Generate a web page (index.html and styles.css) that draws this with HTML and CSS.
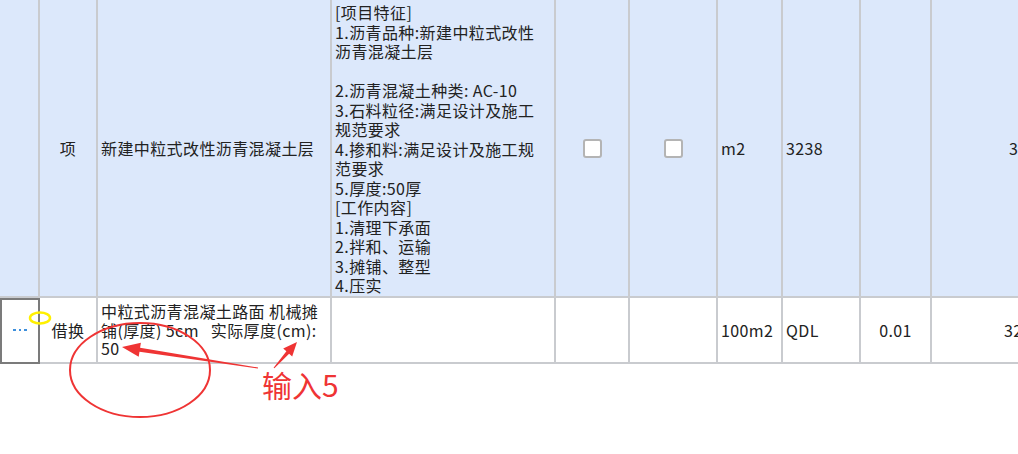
FILE: index.html
```html
<!DOCTYPE html>
<html lang="zh-CN">
<head>
  <meta charset="UTF-8">
  <title>清单项目</title>
  <link rel="stylesheet" href="styles.css">
</head>
<body>
  <div class="sheet">
    <div class="grid">
      <!-- 清单行 -->
      <div class="cell item"></div>
      <div class="cell item center">项</div>
      <div class="cell item">新建中粒式改性沥青混凝土层</div>
      <div class="cell item desc">
        [项目特征]<br>
        1.沥青品种:新建中粒式改性<br>
        沥青混凝土层<br>
        <br>
        2.沥青混凝土种类: AC-10<br>
        3.石料粒径:满足设计及施工<br>
        规范要求<br>
        4.掺和料:满足设计及施工规<br>
        范要求<br>
        5.厚度:50厚<br>
        [工作内容]<br>
        1.清理下承面<br>
        2.拌和、运输<br>
        3.摊铺、整型<br>
        4.压实
      </div>
      <div class="cell item center"><span class="check"></span></div>
      <div class="cell item center"><span class="check"></span></div>
      <div class="cell item">m2</div>
      <div class="cell item">3238</div>
      <div class="cell item"></div>
      <div class="cell item right">3238</div>

      <!-- 定额子目 -->
      <div class="cell picked center">
        <span class="more"><i></i><i></i><i></i></span>
      </div>
      <div class="cell center">借换</div>
      <div class="cell">
        <div class="lines">
          中粒式沥青混凝土路面 机械摊<br>
          铺(厚度) 5cm&nbsp;&nbsp; 实际厚度(cm):<br>
          50
        </div>
      </div>
      <div class="cell"></div>
      <div class="cell"></div>
      <div class="cell"></div>
      <div class="cell">100m2</div>
      <div class="cell">QDL</div>
      <div class="cell center">0.01</div>
      <div class="cell right">32.38</div>
    </div>

    <svg class="marks" width="1018" height="454" viewBox="0 0 1018 454">
      <ellipse cx="140" cy="370" rx="70" ry="47" fill="none" stroke="#ef3434" stroke-width="2"/>
      <polygon fill="#ef3434" points="122,347 140.9,342.8 140.1,347.8 258.1,367.5 257.9,368.5 139.5,351.7 138.7,356.7"/>
      <polygon fill="#ef3434" points="297,342 292.2,356.5 289.1,353.7 274.4,368.3 273.6,367.7 286.4,351.3 283.2,348.5"/>
      <ellipse cx="40" cy="318" rx="10" ry="5.5" fill="none" stroke="#fff000" stroke-width="2.5"/>
    </svg>
    <div class="note">输入5</div>
  </div>
</body>
</html>
```

FILE: styles.css
```css
body {
  margin: 0;
  overflow: hidden;
  background: #fff;
  font-family: "Noto Sans CJK SC", sans-serif;
}

.sheet {
  position: relative;
  width: 1018px;
  height: 454px;
  overflow: hidden;
}

.grid {
  display: grid;
  grid-template-columns: 40px 58px 234px 224px 74px 88px 65px 78px 71px 120px;
  grid-template-rows: 298px 66px;
  width: 1052px;
  font-size: 16px;
  letter-spacing: 0.4px;
  color: #222;
}

.cell {
  box-sizing: border-box;
  display: flex;
  align-items: center;
  padding: 0 3px;
  border-right: 2px solid #c9cbcf;
  border-bottom: 2px solid #c9cbcf;
  white-space: nowrap;
  overflow: hidden;
  background: #fff;
}

.item {
  background: #dce8fb;
}

.center {
  justify-content: center;
}

.right {
  justify-content: flex-end;
  padding-right: 4px;
}

.desc {
  display: block;
  padding-top: 3px;
  line-height: 19.5px;
}

.lines {
  line-height: 18.5px;
}

.check {
  width: 19px;
  height: 19px;
  box-sizing: border-box;
  border: 2px solid #b4b4b4;
  border-radius: 3px;
  background: #fff;
}

.picked {
  outline: 2px solid #7b7b7b;
  outline-offset: -2px;
}

.more {
  display: flex;
  gap: 3px;
  margin-left: 2px;
}

.more i {
  width: 2.5px;
  height: 2.5px;
  background: #3d8fdc;
}

.marks {
  position: absolute;
  left: 0;
  top: 0;
}

.note {
  position: absolute;
  left: 262px;
  top: 366px;
  font-size: 30px;
  line-height: 36px;
  color: #ef3434;
}
```
